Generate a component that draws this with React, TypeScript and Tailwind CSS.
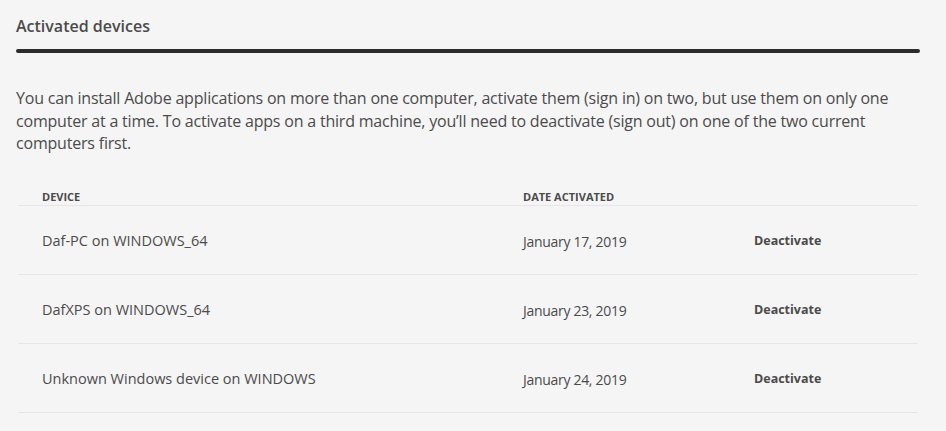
const devices = [
  { name: 'Daf-PC on WINDOWS_64', date: 'January 17, 2019' },
  { name: 'DafXPS on WINDOWS_64', date: 'January 23, 2019' },
  { name: 'Unknown Windows device on WINDOWS', date: 'January 24, 2019' },
]

export default function App() {
  return (
    <div className="min-h-[431px] w-[946px] bg-[#f5f5f5] font-['Open_Sans',sans-serif] text-[#4b4b4b]">
      <div className="px-4 pt-[15px]">
        <h2 className="text-[16px] font-semibold leading-[22px] text-[#4b4b4b]">Activated devices</h2>
        <div className="mt-[12px] mr-[10px] h-[4px] rounded-full bg-[#2c2c2c]" />
        <p className="mt-[34px] pr-[10px] text-[16px] leading-[22.5px] tracking-[-0.2px]">
          You can install Adobe applications on more than one computer, activate them (sign in) on two, but use them on
          only one computer at a time. To activate apps on a third machine, you’ll need to deactivate (sign out) on one
          of the two current computers first.
        </p>
      </div>
      <table className="ml-[18px] mt-[34px] w-[900px] table-fixed border-collapse">
        <colgroup>
          <col className="w-[481px]" />
          <col className="w-[214px]" />
          <col className="w-[205px]" />
        </colgroup>
        <thead>
          <tr className="border-b border-[#e6e6e6]">
            <th className="px-6 pb-0 text-left text-[11px] font-bold uppercase leading-[16px] text-[#4b4b4b]">Device</th>
            <th className="px-6 pb-0 text-left text-[11px] font-bold uppercase leading-[16px] text-[#4b4b4b]">
              Date activated
            </th>
            <th />
          </tr>
        </thead>
        <tbody>
          {devices.map((d) => (
            <tr key={d.name} className="h-[69px] border-b border-[#e6e6e6]">
              <td className="px-6 pt-[3px] text-[14.5px]">{d.name}</td>
              <td className="px-6 pt-[3px] text-[14px] tracking-[-0.3px]">{d.date}</td>
              <td className="pl-[41px] pt-[3px] text-[12.5px] font-bold text-[#4b4b4b]">Deactivate</td>
            </tr>
          ))}
        </tbody>
      </table>
    </div>
  )
}
